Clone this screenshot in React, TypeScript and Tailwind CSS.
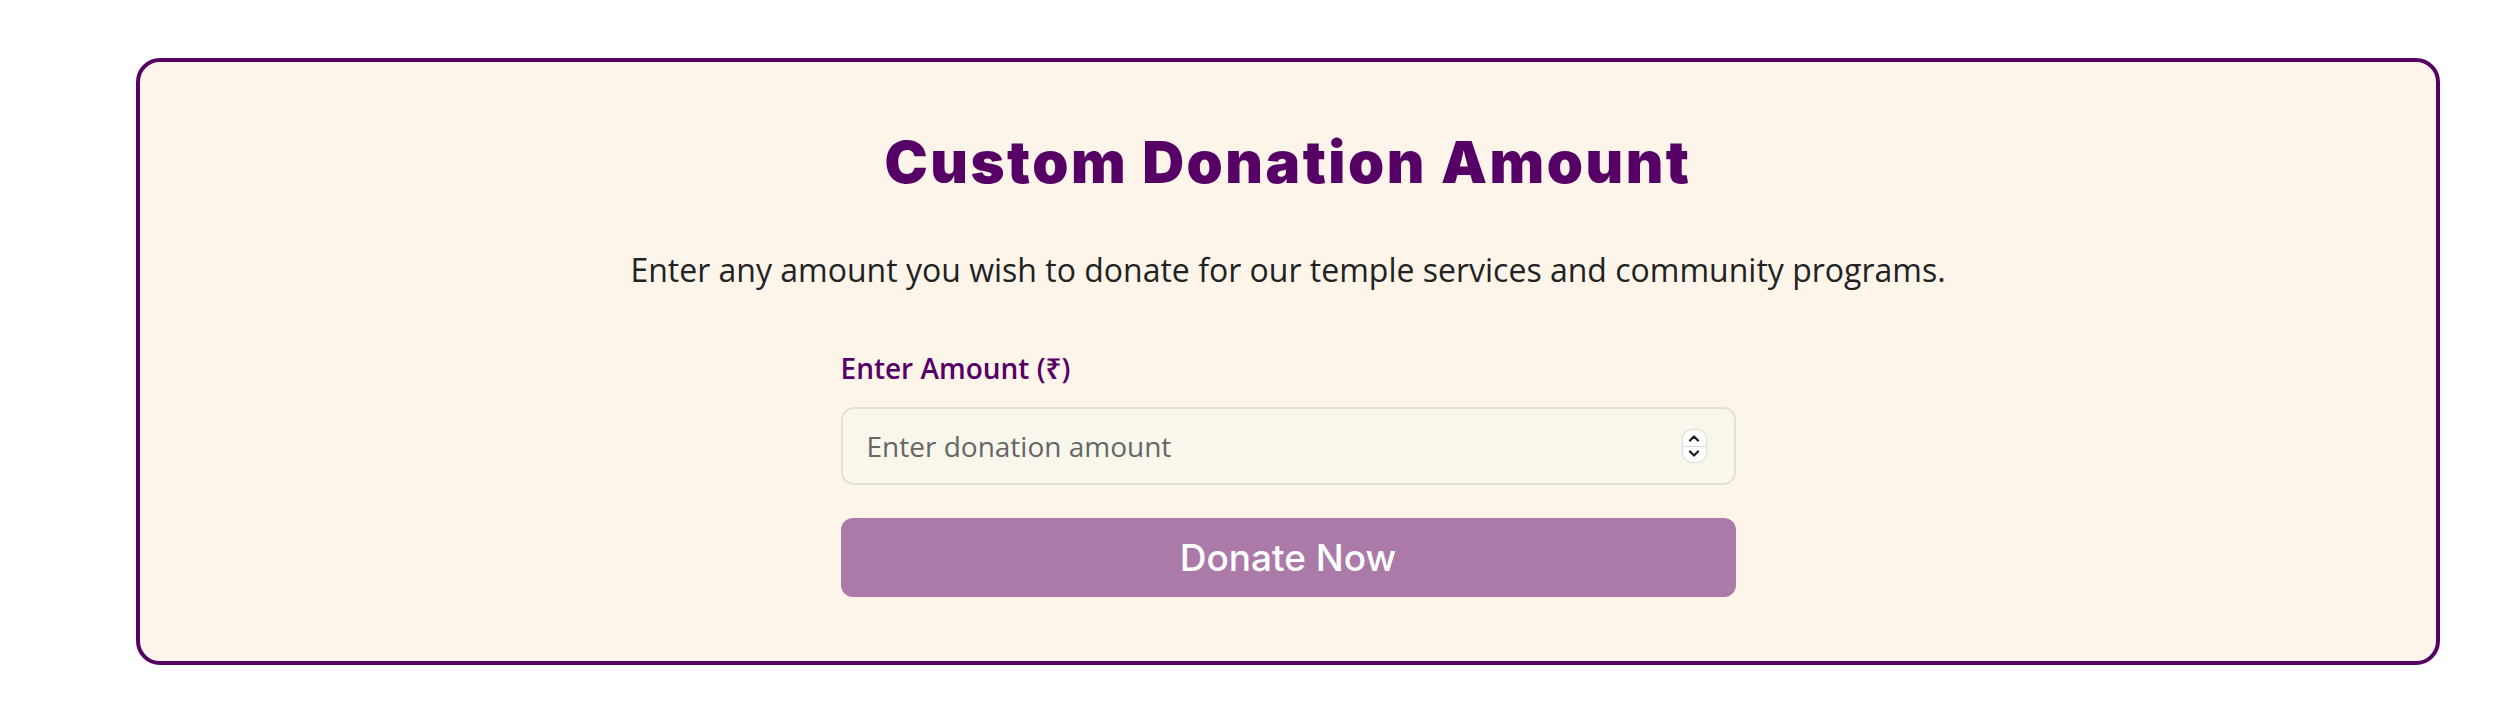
import { useState } from "react";

function Spinner() {
  return (
    <div className="pointer-events-none absolute right-[30px] top-1/2 flex h-[32px] w-[23px] -translate-y-1/2 flex-col overflow-hidden rounded-[9px] bg-white shadow-[0_0_2px_rgba(0,0,0,0.35)]">
      <div className="flex flex-1 items-center justify-center border-b border-[#d6d6d6]">
        <svg width="12" height="8" viewBox="0 0 12 8" fill="none">
          <path d="M2 6.5 L6 2.5 L10 6.5" stroke="#1c1c1c" strokeWidth="2.2" strokeLinecap="round" strokeLinejoin="round" />
        </svg>
      </div>
      <div className="flex flex-1 items-center justify-center">
        <svg width="12" height="8" viewBox="0 0 12 8" fill="none">
          <path d="M2 1.5 L6 5.5 L10 1.5" stroke="#1c1c1c" strokeWidth="2.2" strokeLinecap="round" strokeLinejoin="round" />
        </svg>
      </div>
    </div>
  );
}

export default function App() {
  const [amount, setAmount] = useState("");

  return (
    <div className="min-h-[704px] w-[2512px] bg-white pt-[58px]">
      <section className="ml-[136px] flex w-[2304px] flex-col items-center rounded-[24px] border-4 border-[#560066] bg-[#fef5ea] pb-[64px] pt-[71px]">
        <h2 className="font-['Inter',sans-serif] text-[58px] font-black leading-none tracking-[2.5px] text-[#560066]">
          Custom Donation Amount
        </h2>
        <p className="mt-[63px] font-['Open_Sans','Noto_Sans',sans-serif] text-[32px] leading-none text-[#222222]">
          Enter any amount you wish to donate for our temple services and community programs.
        </p>
        <form className="mt-[68px] flex w-[895px] flex-col" onSubmit={(e) => e.preventDefault()}>
          <label
            htmlFor="amount"
            className="font-['Open_Sans','Noto_Sans',sans-serif] text-[28px] font-semibold leading-none text-[#560066]"
          >
            Enter Amount (₹)
          </label>
          <div className="relative mt-[25px]">
            <input
              id="amount"
              type="text"
              inputMode="numeric"
              value={amount}
              onChange={(e) => setAmount(e.target.value)}
              placeholder="Enter donation amount"
              className="h-[78px] w-full rounded-[13px] border-2 border-[#e2e0da] bg-[#f9f7ec] px-[24px] font-['Open_Sans','Noto_Sans',sans-serif] text-[28px] text-[#333] outline-none placeholder:text-[#666666]"
            />
            <Spinner />
          </div>
          <button
            type="submit"
            className="mt-[33px] h-[79px] w-full rounded-[12px] bg-[#ab7aa8] font-['Inter',sans-serif] text-[37px] font-medium text-white"
          >
            Donate Now
          </button>
        </form>
      </section>
    </div>
  );
}
